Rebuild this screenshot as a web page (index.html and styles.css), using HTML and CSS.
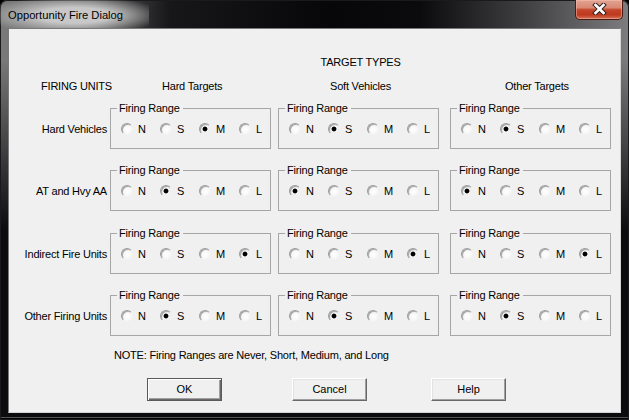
FILE: index.html
```html
<!DOCTYPE html>
<html>
<head>
<meta charset="utf-8">
<link rel="stylesheet" href="styles.css">
</head>
<body>
<div class="window">
  <div class="titlebar">
    <span class="title">Opportunity Fire Dialog</span>
    <div class="close">
      <svg width="15" height="12" viewBox="0 0 15 12">
        <path d="M3.5 2 L11.5 10 M11.5 2 L3.5 10" stroke="#3a2420" stroke-width="4.6" stroke-linecap="square" fill="none"/>
        <path d="M3.5 2 L11.5 10 M11.5 2 L3.5 10" stroke="#ffffff" stroke-width="2.6" stroke-linecap="square" fill="none"/>
      </svg>
    </div>
  </div>
  <div class="client">
    <div class="heading">TARGET TYPES</div>
    <div class="cols head">
      <div class="units">FIRING UNITS</div>
      <div class="th">Hard Targets</div>
      <div class="th">Soft Vehicles</div>
      <div class="th th3">Other Targets</div>
    </div>
    <div class="cols matrix">
      <div class="rowlabel">Hard Vehicles</div>
      <fieldset class="group"><legend>Firing Range</legend><div class="radios">
        <span class="radio"><i class="dot"></i>N</span><span class="radio"><i class="dot"></i>S</span><span class="radio on"><i class="dot"></i>M</span><span class="radio"><i class="dot"></i>L</span>
      </div></fieldset>
      <fieldset class="group"><legend>Firing Range</legend><div class="radios">
        <span class="radio"><i class="dot"></i>N</span><span class="radio on"><i class="dot"></i>S</span><span class="radio"><i class="dot"></i>M</span><span class="radio"><i class="dot"></i>L</span>
      </div></fieldset>
      <fieldset class="group"><legend>Firing Range</legend><div class="radios">
        <span class="radio"><i class="dot"></i>N</span><span class="radio on"><i class="dot"></i>S</span><span class="radio"><i class="dot"></i>M</span><span class="radio"><i class="dot"></i>L</span>
      </div></fieldset>

      <div class="rowlabel">AT and Hvy AA</div>
      <fieldset class="group"><legend>Firing Range</legend><div class="radios">
        <span class="radio"><i class="dot"></i>N</span><span class="radio on"><i class="dot"></i>S</span><span class="radio"><i class="dot"></i>M</span><span class="radio"><i class="dot"></i>L</span>
      </div></fieldset>
      <fieldset class="group"><legend>Firing Range</legend><div class="radios">
        <span class="radio on"><i class="dot"></i>N</span><span class="radio"><i class="dot"></i>S</span><span class="radio"><i class="dot"></i>M</span><span class="radio"><i class="dot"></i>L</span>
      </div></fieldset>
      <fieldset class="group"><legend>Firing Range</legend><div class="radios">
        <span class="radio on"><i class="dot"></i>N</span><span class="radio"><i class="dot"></i>S</span><span class="radio"><i class="dot"></i>M</span><span class="radio"><i class="dot"></i>L</span>
      </div></fieldset>

      <div class="rowlabel">Indirect Fire Units</div>
      <fieldset class="group"><legend>Firing Range</legend><div class="radios">
        <span class="radio"><i class="dot"></i>N</span><span class="radio"><i class="dot"></i>S</span><span class="radio"><i class="dot"></i>M</span><span class="radio on"><i class="dot"></i>L</span>
      </div></fieldset>
      <fieldset class="group"><legend>Firing Range</legend><div class="radios">
        <span class="radio"><i class="dot"></i>N</span><span class="radio"><i class="dot"></i>S</span><span class="radio"><i class="dot"></i>M</span><span class="radio on"><i class="dot"></i>L</span>
      </div></fieldset>
      <fieldset class="group"><legend>Firing Range</legend><div class="radios">
        <span class="radio"><i class="dot"></i>N</span><span class="radio"><i class="dot"></i>S</span><span class="radio"><i class="dot"></i>M</span><span class="radio on"><i class="dot"></i>L</span>
      </div></fieldset>

      <div class="rowlabel">Other Firing Units</div>
      <fieldset class="group"><legend>Firing Range</legend><div class="radios">
        <span class="radio"><i class="dot"></i>N</span><span class="radio on"><i class="dot"></i>S</span><span class="radio"><i class="dot"></i>M</span><span class="radio"><i class="dot"></i>L</span>
      </div></fieldset>
      <fieldset class="group"><legend>Firing Range</legend><div class="radios">
        <span class="radio"><i class="dot"></i>N</span><span class="radio on"><i class="dot"></i>S</span><span class="radio"><i class="dot"></i>M</span><span class="radio"><i class="dot"></i>L</span>
      </div></fieldset>
      <fieldset class="group"><legend>Firing Range</legend><div class="radios">
        <span class="radio"><i class="dot"></i>N</span><span class="radio on"><i class="dot"></i>S</span><span class="radio"><i class="dot"></i>M</span><span class="radio"><i class="dot"></i>L</span>
      </div></fieldset>
    </div>
    <p class="note">NOTE: Firing Ranges are Never, Short, Medium, and Long</p>
    <div class="buttons">
      <button class="btn default ok">OK</button>
      <button class="btn cancel">Cancel</button>
      <button class="btn help">Help</button>
    </div>
  </div>
</div>
</body>
</html>
```
FILE: styles.css
```css
html, body {
  margin: 0;
  padding: 0;
  background: #000;
}
body {
  width: 629px;
  height: 420px;
  overflow: hidden;
  font-family: "Liberation Sans", Arial, sans-serif;
  font-size: 11px;
  line-height: 13px;
  letter-spacing: -0.2px;
  color: #000;
}
.window {
  width: 629px;
  height: 420px;
  box-sizing: border-box;
  padding: 0 8px 7px;
  display: flex;
  flex-direction: column;
  border-radius: 7px 7px 0 0;
  background:
    linear-gradient(to bottom, rgba(12,12,15,0) 0, rgba(12,12,15,0) 60px, #0c0c0f 230px),
    linear-gradient(to right, #7a7a7a 0, #606060 90px, #17171a 170px, #07070a 330px, #0b0b0e 420px, #3d3d40 520px, #6c6c6f 600px, #7d7d80 629px);
  box-shadow: inset 0 0 0 1px #1a1a1d, inset 0 -2px 0 #000, inset 0 -3px 0 #555;
}
.titlebar {
  height: 28px;
  flex: none;
  display: flex;
  align-items: flex-start;
}
.title {
  font-family: "Liberation Sans", Arial, sans-serif;
  font-size: 11.2px;
  letter-spacing: 0;
  line-height: 14px;
  margin: 0 0 0 -8px;
  padding: 8px 26px 6px 8px;
  background: radial-gradient(ellipse 60% 70% at 50% 55%, rgba(205,205,205,0.95) 40%, rgba(160,160,160,0) 100%);
  color: #000;
  white-space: nowrap;
}
.close {
  width: 48px;
  height: 20px;
  box-sizing: border-box;
  margin-left: auto;
  margin-right: -2px;
  border: 1px solid #4a1b12;
  border-top: none;
  border-radius: 0 0 5px 5px;
  background: linear-gradient(to bottom, #e2a392 0, #d88a74 40%, #c4462a 52%, #be3a1e 78%, #d77256 100%);
  box-shadow: inset 0 0 0 1px rgba(255,200,190,0.45);
  display: flex;
  align-items: center;
  justify-content: center;
}
.close svg {
  display: block;
  margin-top: -1px;
}
.client {
  flex: 1;
  background: #f0f0f0;
  border: 1px solid;
  border-color: #7a7a7a #d4d4d4 #d4d4d4 #7a7a7a;
  padding-top: 27px;
}
.heading {
  margin-left: 101px;
  width: 501px;
  text-align: center;
}
.cols {
  display: grid;
  grid-template-columns: 101px 168px 172px 161px;
}
.head {
  margin-top: 11px;
  white-space: nowrap;
}
.units {
  padding-left: 32px;
}
.th {
  padding-left: 52px;
}
.th3 {
  padding-left: 55px;
}
.matrix {
  margin-top: 9px;
  grid-template-rows: 47px 48px 47px 47px;
  row-gap: 15px;
  align-items: start;
}
.rowlabel {
  text-align: right;
  padding-right: 3px;
  padding-top: 21px;
  white-space: nowrap;
}
.group {
  width: 161px;
  box-sizing: border-box;
  margin: 0;
  padding: 0;
  min-inline-size: 0;
  border: 1px solid #a6a6a6;
}
.group legend {
  margin-left: 6px;
  padding: 0 3px 0 2px;
  line-height: 13px;
}
.radios {
  display: flex;
  padding: 8px 0 13px 10px;
  height: 12px;
}
.radio {
  flex: none;
  width: 39px;
  display: flex;
  align-items: flex-start;
  line-height: 13px;
}
.radio:nth-child(3) {
  width: 40px;
}
.dot {
  flex: none;
  width: 12px;
  height: 12px;
  box-sizing: border-box;
  border-radius: 50%;
  border: 1px solid;
  border-color: #9c9c9c #f2f2f2 #f2f2f2 #9c9c9c;
  background: radial-gradient(circle at 55% 55%, #ffffff 0, #f6f6f6 55%, #e2e2e2 100%);
  box-shadow: inset 1px 1px 0 rgba(110,110,110,0.55);
  margin-right: 5px;
}
.radio.on .dot {
  background: radial-gradient(circle at 50% 50%, #000 0, #000 1.7px, #333 2.2px, #f6f6f6 2.8px, #e2e2e2 100%);
}
.note {
  margin: 13px 0 0;
  padding-left: 105px;
}
.buttons {
  display: flex;
  margin-top: 16px;
}
.btn {
  width: 75px;
  height: 23px;
  box-sizing: border-box;
  padding: 0;
  font: inherit;
  color: #000;
  background: #f0f0f0;
  border: 1px solid;
  border-color: #ffffff #696969 #696969 #ffffff;
  box-shadow: inset -1px -1px 0 #a0a0a0, inset 1px 1px 0 #e3e3e3;
}
.btn.default {
  border-color: #5a5a5a;
  box-shadow: inset 1px 1px 0 #fff, inset -1px -1px 0 #696969, inset -2px -2px 0 #a0a0a0;
}
.ok {
  margin-left: 138px;
}
.cancel {
  margin-left: 70px;
}
.help {
  margin-left: 64px;
}
```
